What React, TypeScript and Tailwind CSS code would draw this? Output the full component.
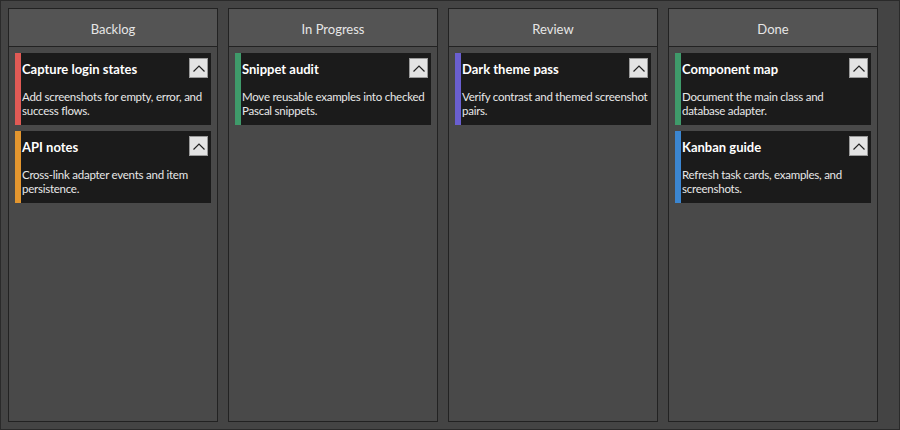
import React from "react";

type Card = { title: string; text: string; stripe: string };
type Column = { name: string; cards: Card[] };

const COLUMNS: Column[] = [
  {
    name: "Backlog",
    cards: [
      { title: "Capture login states", text: "Add screenshots for empty, error, and success flows.", stripe: "bg-[#e05a55]" },
      { title: "API notes", text: "Cross-link adapter events and item persistence.", stripe: "bg-[#e3962f]" },
    ],
  },
  {
    name: "In Progress",
    cards: [
      { title: "Snippet audit", text: "Move reusable examples into checked Pascal snippets.", stripe: "bg-[#3f9a6a]" },
    ],
  },
  {
    name: "Review",
    cards: [
      { title: "Dark theme pass", text: "Verify contrast and themed screenshot pairs.", stripe: "bg-[#6a5fd0]" },
    ],
  },
  {
    name: "Done",
    cards: [
      { title: "Component map", text: "Document the main class and database adapter.", stripe: "bg-[#3f9a6a]" },
      { title: "Kanban guide", text: "Refresh task cards, examples, and screenshots.", stripe: "bg-[#3b86d1]" },
    ],
  },
];

const TaskCard = ({ card }: { card: Card }) => (
  <div className="flex h-[72px] bg-[#1b1b1b]">
    <div className={`w-[6px] shrink-0 ${card.stripe}`} />
    <div className="flex-1 min-w-0 pl-[1px] pr-[3px]">
      <div className="flex items-start justify-between pt-[5px]">
        <span className="text-[13px] font-bold text-white leading-[20px] pt-[1px]">
          {card.title}
        </span>
        <button className="w-[19px] h-[20px] flex items-center justify-center bg-[#e3e3e3] border border-[#9a9a9a]">
          <svg width="12" height="7" viewBox="0 0 12 7">
            <path d="M0.5 6.5 L6 1 L11.5 6.5" fill="none" stroke="#222" strokeWidth="1.2" />
          </svg>
        </button>
      </div>
      <p className="mt-[11px] text-[11.5px] tracking-[-0.25px] leading-[14px] text-[#e8e8e8]">
        {card.text}
      </p>
    </div>
  </div>
);

export default function App() {
  return (
    <div
      className="w-[900px] h-[430px] bg-[#444444] border border-[#2a2a2a] flex gap-[10px] pl-[7px] pt-[7px] pb-[7px]"
      style={{ fontFamily: 'Lato, "Noto Sans", sans-serif' }}
    >
      {COLUMNS.map((col) => (
        <div key={col.name} className="w-[210px] h-[414px] flex flex-col bg-[#494949] border border-[#222222]">
          <div className="h-[38px] shrink-0 flex items-center justify-center pt-[5px] bg-[#545454] border-b border-[#222222] text-[13px] text-[#e6e6e6]">
            {col.name}
          </div>
          <div className="flex flex-col gap-[6px] px-[6px] pt-[6px]">
            {col.cards.map((card) => (
              <TaskCard key={card.title} card={card} />
            ))}
          </div>
        </div>
      ))}
    </div>
  );
}
